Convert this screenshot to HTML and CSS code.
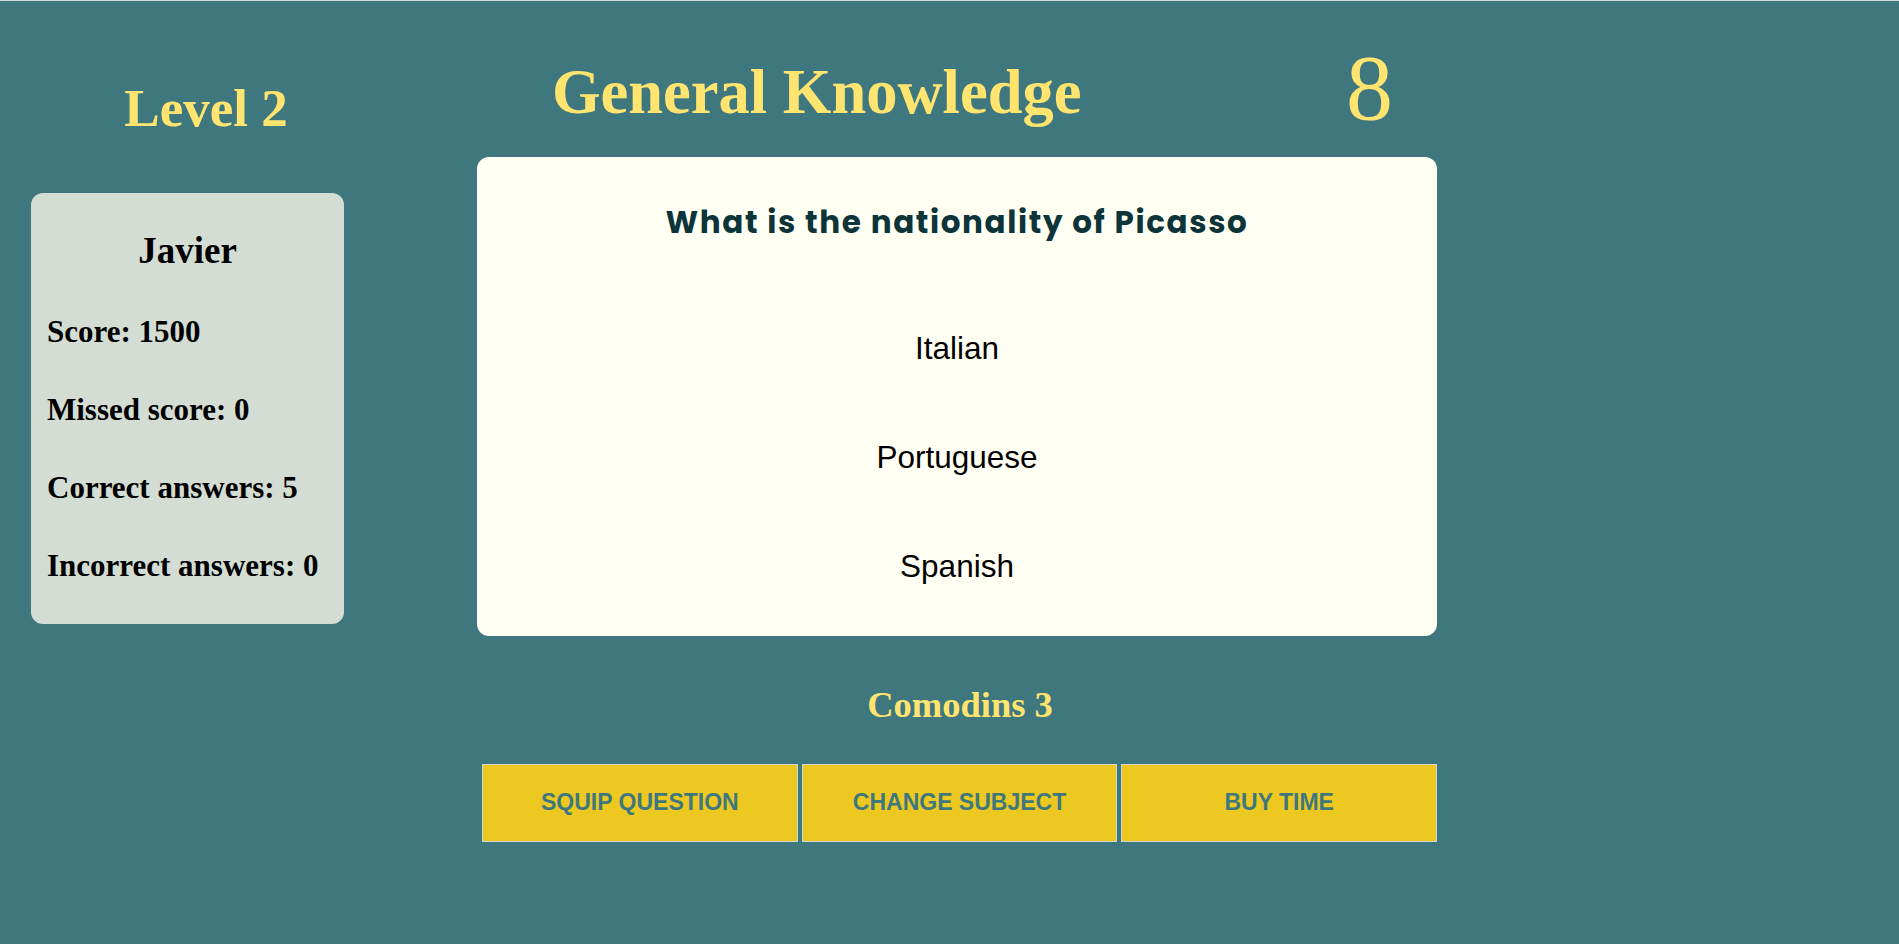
FILE: index.html
```html
<!DOCTYPE html>
<html lang="en">
<head>
<meta charset="utf-8">
<title>Trivia</title>
<link rel="stylesheet" href="styles.css">
</head>
<body>
<div class="layout">
  <aside class="side">
    <h1 class="level">Level 2</h1>
    <section class="player">
      <h2 class="player-name">Javier</h2>
      <p class="stat">Score: 1500</p>
      <p class="stat">Missed score: 0</p>
      <p class="stat">Correct answers: 5</p>
      <p class="stat">Incorrect answers: 0</p>
    </section>
  </aside>
  <main class="game">
    <header class="title-row">
      <h1 class="subject">General Knowledge</h1>
      <span class="timer">8</span>
    </header>
    <section class="question-card">
      <h3 class="question">What is the nationality of Picasso</h3>
      <div class="answers">
        <p class="answer">Italian</p>
        <p class="answer">Portuguese</p>
        <p class="answer">Spanish</p>
      </div>
    </section>
    <h2 class="comodins">Comodins 3</h2>
    <div class="actions">
      <button class="action">SQUIP QUESTION</button>
      <button class="action">CHANGE SUBJECT</button>
      <button class="action">BUY TIME</button>
    </div>
  </main>
</div>
</body>
</html>
```

FILE: styles.css
```css
* { box-sizing: border-box; }

html, body {
  height: 100%;
}

body {
  margin: 0;
  background: #3e777d;
  border-top: 1px solid #d6d9d9;
  font-family: "Liberation Serif", "Times New Roman", serif;
  overflow: hidden;
}

.layout {
  display: flex;
  align-items: flex-start;
}

.side {
  margin-left: 31px;
  width: 350px;
  display: flex;
  flex-direction: column;
}

.level {
  margin: 81px 0 0;
  font-size: 53px;
  line-height: 1;
  font-weight: bold;
  color: #ffe470;
  text-align: center;
}

.player {
  margin-top: 58px;
  width: 313px;
  background: #d3ddd3;
  border-radius: 12px;
  padding: 39px 16px 43px;
  color: #000;
}

.player-name {
  margin: 0;
  font-size: 37px;
  line-height: 1;
  text-align: center;
  font-weight: bold;
}

.stat {
  margin: 47px 0 0;
  font-size: 31px;
  line-height: 1;
  font-weight: bold;
}

.game {
  margin-left: 96px;
  width: 960px;
  display: flex;
  flex-direction: column;
}

.title-row {
  display: flex;
  align-items: flex-start;
  padding-top: 39px;
  padding-left: 75px;
}

.subject {
  margin: 21px 0 0;
  font-size: 62.5px;
  line-height: 1;
  font-weight: bold;
  color: #ffe470;
}

.timer {
  margin-left: auto;
  margin-right: 44px;
  font-size: 94px;
  line-height: 1;
  color: #ffe470;
}

.question-card {
  margin-top: 23px;
  height: 479px;
  background: #fffff3;
  border-radius: 12px;
  padding-top: 50px;
  text-align: center;
}

.question {
  margin: 0;
  font-family: "Poppins", "Open Sans", sans-serif;
  font-size: 31px;
  line-height: 1;
  font-weight: 700;
  color: #0c3439;
  letter-spacing: 1.6px;
}

.answers {
  margin-top: 95px;
  display: flex;
  flex-direction: column;
  gap: 77.5px;
}

.answer {
  margin: 0;
  font-family: "Liberation Sans", Arial, sans-serif;
  font-size: 31.5px;
  line-height: 1;
  color: #000;
}

.comodins {
  margin: 51px 0 0;
  padding-left: 6px;
  font-size: 36.5px;
  line-height: 1;
  font-weight: bold;
  color: #ffe470;
  text-align: center;
}

.actions {
  margin-top: 40px;
  margin-left: 5px;
  display: flex;
  gap: 4px;
}

.action {
  width: 316px;
  height: 78px;
  background: #ecc821;
  border: 1px solid #d5d5d0;
  color: #3e787e;
  font-family: "Liberation Sans", Arial, sans-serif;
  font-size: 23px;
  font-weight: bold;
  padding: 0;
}
```
